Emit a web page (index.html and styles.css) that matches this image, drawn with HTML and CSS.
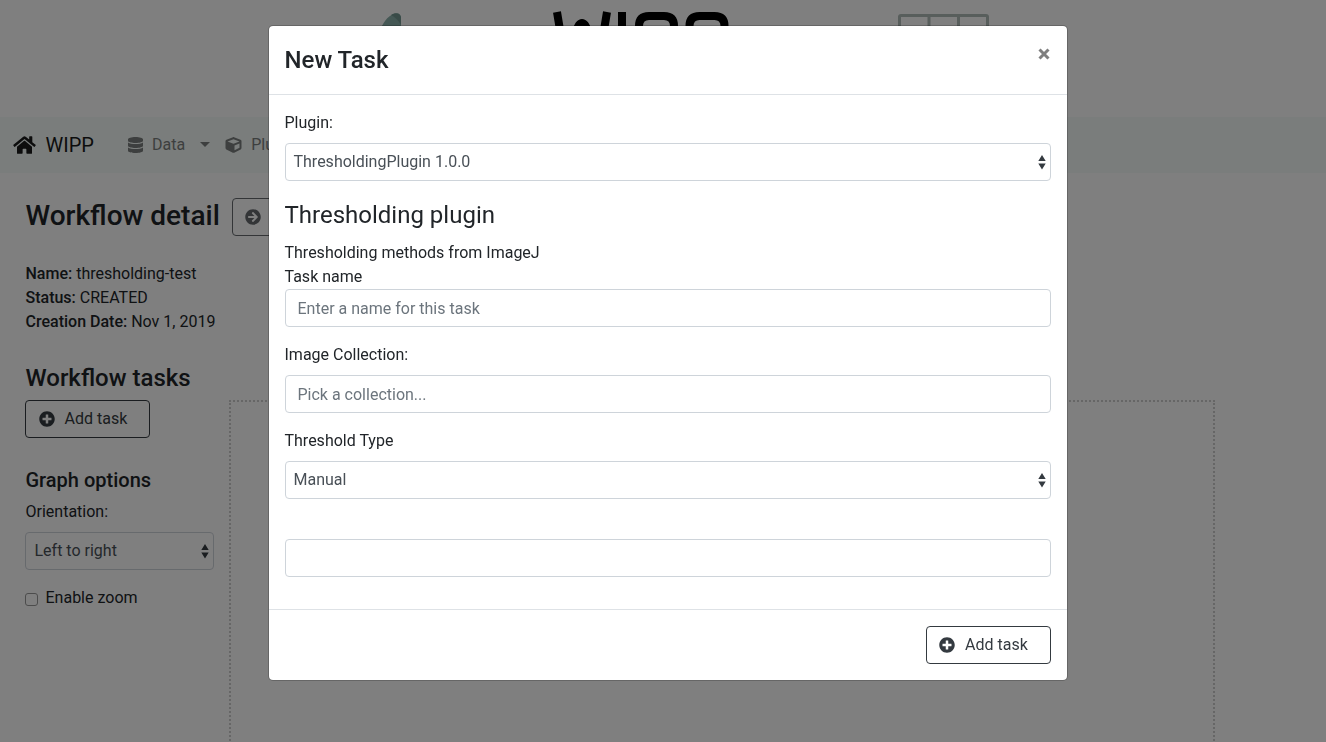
FILE: index.html
```html
<!DOCTYPE html>
<html lang="en">
<head>
<meta charset="utf-8">
<title>WIPP</title>
<link rel="stylesheet" href="styles.css">
</head>
<body>
<svg class="defs" width="0" height="0" aria-hidden="true">
  <symbol id="plus" viewBox="0 0 512 512"><path fill="currentColor" d="M256 8C119 8 8 119 8 256s111 248 248 248 248-111 248-248S393 8 256 8zm144 276c0 6.600-5.400 12-12 12h-92v92c0 6.600-5.400 12-12 12h-56c-6.600 0-12-5.400-12-12v-92h-92c-6.600 0-12-5.400-12-12v-56c0-6.600 5.400-12 12-12h92v-92c0-6.600 5.400-12 12-12h56c6.600 0 12 5.400 12 12v92h92c6.600 0 12 5.400 12 12v56z"/></symbol>
  <symbol id="sort" viewBox="0 0 8 15"><path fill="#343a40" d="M4 0L.3 6h7.400zm0 14.500L.3 8.500h7.400z"/></symbol>
</svg>

<div class="page">
  <header class="banner">
    <svg class="banner-art" width="1326" height="60" viewBox="0 0 1326 60">
      <path fill="#8bb0aa" d="M379 32c4-9 8-16 15-18 4-2 7 0 7 4v20h-24z"/>
      <path fill="#739791" d="M391 15c4-3 9-2 10 2v8c-3-5-6-8-10-10z"/>
      <g fill="none" stroke="#000" stroke-width="8">
        <path d="M557 12l4 24M607 12l-4 24M573 36l6-11q3-4 6 0l6 11"/>
        <path d="M622 12v40M639 52V26q0-10 10-10h15q10 0 10 10v14M689.500 52V26q0-10 10-10h15q10 0 10 10v14"/>
      </g>
      <path fill="none" stroke="#b0bcb8" stroke-width="3" d="M899.500 50V17q0-1.500 1.500-1.500h85q1.500 0 1.500 1.500v33M929 16v34M958.500 16v34"/>
    </svg>
  </header>

  <nav class="navbar">
    <a class="brand">
      <svg width="23" height="20" viewBox="0 0 576 512"><path fill="currentColor" d="M280.370 148.260L96 300.110V464a16 16 0 0 0 16 16l112.060-.290a16 16 0 0 0 15.920-16V368a16 16 0 0 1 16-16h64a16 16 0 0 1 16 16v95.640a16 16 0 0 0 16 16.050L464 480a16 16 0 0 0 16-16V300L295.670 148.260a12.190 12.190 0 0 0-15.300 0zM571.600 251.470L488 182.560V44.050a12 12 0 0 0-12-12h-56a12 12 0 0 0-12 12v72.610L318.470 43a48 48 0 0 0-61 0L4.340 251.470a12 12 0 0 0-1.600 16.900l25.500 31A12 12 0 0 0 45.150 301l235.220-193.740a12.190 12.190 0 0 1 15.300 0L530.900 301a12 12 0 0 0 16.900-1.600l25.500-31a12 12 0 0 0-1.700-16.930z"/></svg>
      <span>WIPP</span>
    </a>
    <a class="nav-link">
      <svg width="15" height="16" viewBox="0 0 448 512" preserveAspectRatio="none"><path fill="currentColor" d="M448 73.143v45.714C448 159.143 347.667 192 224 192S0 159.143 0 118.857V73.143C0 32.857 100.333 0 224 0s224 32.857 224 73.143zM448 176v102.857C448 319.143 347.667 352 224 352S0 319.143 0 278.857V176c48.125 33.143 136.208 48.572 224 48.572S399.874 209.143 448 176zm0 160v102.857C448 479.143 347.667 512 224 512S0 479.143 0 438.857V336c48.125 33.143 136.208 48.572 224 48.572S399.874 369.143 448 336z"/></svg>
      <span>Data</span><i class="caret"></i>
    </a>
    <a class="nav-link">
      <svg width="17" height="16" viewBox="0 0 512 512"><path fill="currentColor" d="M239.100 6.300l-208 78c-18.700 7-31.100 25-31.100 45v225.100c0 18.200 10.300 34.800 26.500 42.900l208 104c13.500 6.800 29.400 6.800 42.900 0l208-104c16.300-8.100 26.500-24.800 26.500-42.900V129.300c0-20-12.400-37.900-31.100-44.900l-208-78C262 2.200 250 2.200 239.100 6.300zM256 68.400l192 72v1.100l-192 78-192-78v-1.100l192-72zm32 356V275.500l160-65v133.900l-160 80z"/></svg>
      <span>Plugins</span>
    </a>
  </nav>

  <main class="content">
    <div class="title-row">
      <h2>Workflow detail</h2>
      <button class="btn btn-muted" aria-label="Submit"><svg width="16" height="16" viewBox="0 0 512 512"><path fill="currentColor" d="M256 8c137 0 248 111 248 248S393 504 256 504 8 393 8 256 119 8 256 8zm-28.900 143.600l75.500 72.400H120c-13.300 0-24 10.700-24 24v16c0 13.300 10.700 24 24 24h182.600l-75.500 72.400c-9.700 9.300-9.900 24.800-.4 34.300l11 10.900c9.400 9.400 24.600 9.400 33.900 0L404.300 273c9.400-9.400 9.400-24.600 0-33.900L271.600 106.300c-9.400-9.400-24.600-9.400-33.900 0l-11 10.900c-9.500 9.600-9.300 25.100.4 34.400z"/></svg></button>
    </div>
    <p class="meta"><b>Name:</b> thresholding-test<br><b>Status:</b> CREATED<br><b>Creation Date:</b> Nov 1, 2019</p>
    <div class="workspace">
      <aside class="sidebar">
        <h3>Workflow tasks</h3>
        <button class="btn"><svg width="16" height="16"><use href="#plus"/></svg>Add task</button>
        <h4>Graph options</h4>
        <div class="field-label">Orientation:</div>
        <div class="select"><span>Left to right</span><svg width="8" height="15"><use href="#sort"/></svg></div>
        <label class="check"><i class="box"></i>Enable zoom</label>
      </aside>
      <section class="graph"></section>
    </div>
  </main>
</div>

<div class="backdrop">
  <div class="modal">
    <div class="modal-header"><h3>New Task</h3>
      <svg class="close" width="12" height="12" viewBox="0 0 12 12"><path d="M1.500 1.500l9 9M10.500 1.500l-9 9" stroke="#7f7f7f" stroke-width="3"/></svg>
    </div>
    <div class="modal-body">
      <div class="field-label">Plugin:</div>
      <div class="select"><span>ThresholdingPlugin 1.0.0</span><svg width="8" height="15"><use href="#sort"/></svg></div>
      <h3 class="plugin-title">Thresholding plugin</h3>
      <div class="line">Thresholding methods from ImageJ</div>
      <div class="line">Task name</div>
      <div class="input">Enter a name for this task</div>
      <div class="field-label">Image Collection:</div>
      <div class="input">Pick a collection...</div>
      <div class="field-label">Threshold Type</div>
      <div class="select"><span>Manual</span><svg width="8" height="15"><use href="#sort"/></svg></div>
      <div class="input input-last"></div>
    </div>
    <div class="modal-footer"><button class="btn"><svg width="16" height="16"><use href="#plus"/></svg>Add task</button></div>
  </div>
</div>
</body>
</html>
```
FILE: styles.css
```css
* { box-sizing: border-box; }
body { margin: 0; height: 742px; overflow: hidden; background: #fff; color: #212529; font: 16px/24px Roboto, sans-serif; }
h2, h3, h4, p { margin: 0; }
svg { flex: none; }
.defs { position: absolute; }
.page { height: 742px; display: flex; flex-direction: column; overflow: hidden; }
.banner { height: 117px; flex: none; }
.banner-art { display: block; }
.navbar { height: 56px; flex: none; display: flex; align-items: center; padding-left: 13px; background: #f5fbf9; }
.brand { display: flex; align-items: center; gap: 9.5px; width: 114.500px; font-size: 20px; color: #1a1b1b; }
.nav-link { display: flex; align-items: center; gap: 9.500px; margin-right: 15px; color: #7b7f7e; }
.nav-link svg { margin-top: -1px; }
.caret { margin: -2px 0 0 5px; border: 5px solid transparent; border-top-color: #7b7f7e; border-bottom: 0; }
.content { flex: 1; padding: 23px 111px 0 25px; display: flex; flex-direction: column; min-height: 0; }
.title-row { display: flex; align-items: center; height: 40px; gap: 12px; }
h2 { padding-left: .5px; font-size: 28px; line-height: 34px; font-weight: 500; }
h3 { font-size: 24px; line-height: 29px; font-weight: 500; }
h4 { padding-left: .5px; font-size: 20px; line-height: 24px; font-weight: 500; margin: 30px 0 8px; }
b { font-weight: 500; }
.btn { display: inline-flex; align-items: center; gap: 10px; width: 125px; height: 38px; padding: 0 12.500px; border: 1px solid #343a40; border-radius: 4px; background: transparent; color: #343a40; font: inherit; }
.btn svg { margin-top: -1px; }
.btn-muted { opacity: .75; }
.title-row .btn { margin-top: 2px; }
.meta { padding-left: .5px; margin-top: 26px; }
.workspace { display: flex; flex: 1; margin-top: 30px; }
.sidebar { width: 204px; }
.sidebar h3 { padding-left: .5px; margin-bottom: 7px; }
.sidebar .field-label { padding-left: .5px; }
.graph { flex: 1; margin-top: 36px; height: 500px; border: 2px dotted #ccc; }
.field-label { margin-bottom: 8px; }
.select { display: flex; align-items: center; justify-content: space-between; height: 38px; padding: 0 4px 0 8px; border: 1px solid #ced4da; border-radius: 4px; color: #495057; }
.sidebar .select { width: 189px; padding-left: 8.5px; }
.check { display: flex; align-items: center; gap: 7.5px; margin-top: 16px; }
.box { width: 13px; height: 13px; margin-top: 2px; border: 1px solid #999; border-radius: 3px; }
.backdrop { position: fixed; inset: 0; padding: 25px 0 0 268px; background: rgba(0,0,0,.5); }
.modal { width: 800px; height: 656px; display: flex; flex-direction: column; background: #fff; background-clip: padding-box; border: 1px solid rgba(0,0,0,.2); border-radius: 5px; }
.modal-header { display: flex; justify-content: space-between; align-items: flex-start; height: 69px; padding: 20px 17px 0 15.500px; border-bottom: 1px solid #dee2e6; }
.close { margin-top: 2px; }
.modal-body { flex: 1; padding: 16px; }
.modal-body .field-label, .line, .plugin-title { text-indent: -.5px; }
.modal .select { padding-left: 7.500px; }
.plugin-title { margin: 20px 0 11px; font-weight: 400; }
.input { height: 38px; padding: 6.500px 11.500px; border: 1px solid #ced4da; border-radius: 4px; color: #6c757d; margin-bottom: 16px; }
.input-last { margin-top: 40px; }
.modal-footer { display: flex; justify-content: flex-end; height: 71px; padding: 16px; border-top: 1px solid #dee2e6; }
.modal-footer .btn { padding-left: 12px; }
```
